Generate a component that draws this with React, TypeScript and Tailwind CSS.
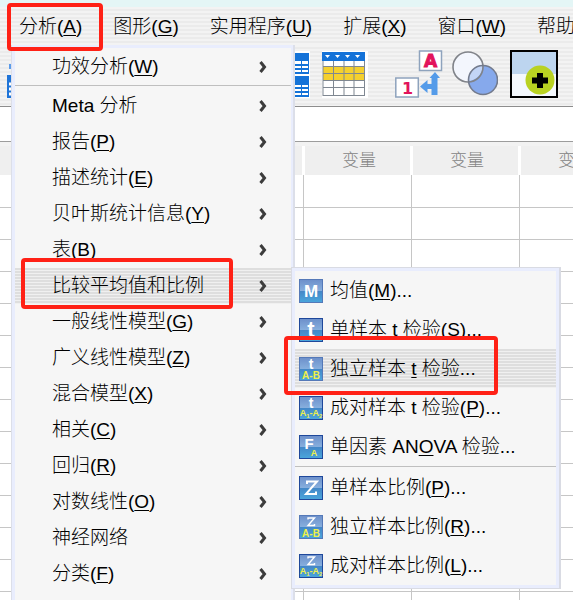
import { Fragment } from "react";
import type { ReactNode } from "react";

interface Label {
  text: string;
  hotkey?: string;
  tail?: string;
}

const topMenus: Label[] = [
  { text: "分析(", hotkey: "A", tail: ")" },
  { text: "图形(", hotkey: "G", tail: ")" },
  { text: "实用程序(", hotkey: "U", tail: ")" },
  { text: "扩展(", hotkey: "X", tail: ")" },
  { text: "窗口(", hotkey: "W", tail: ")" },
  { text: "帮助" },
];

const analyzeItems: Label[] = [
  { text: "功效分析(", hotkey: "W", tail: ")" },
  { text: "Meta 分析" },
  { text: "报告(", hotkey: "P", tail: ")" },
  { text: "描述统计(", hotkey: "E", tail: ")" },
  { text: "贝叶斯统计信息(", hotkey: "Y", tail: ")" },
  { text: "表(", hotkey: "B", tail: ")" },
  { text: "比较平均值和比例" },
  { text: "一般线性模型(", hotkey: "G", tail: ")" },
  { text: "广义线性模型(", hotkey: "Z", tail: ")" },
  { text: "混合模型(", hotkey: "X", tail: ")" },
  { text: "相关(", hotkey: "C", tail: ")" },
  { text: "回归(", hotkey: "R", tail: ")" },
  { text: "对数线性(", hotkey: "O", tail: ")" },
  { text: "神经网络" },
  { text: "分类(", hotkey: "F", tail: ")" },
];

type IconKind = "M" | "t" | "tAB" | "tA1A2" | "F" | "Z" | "ZAB" | "ZA1A2";

const compareItems: (Label & { icon: IconKind })[] = [
  { icon: "M", text: "均值(", hotkey: "M", tail: ")..." },
  { icon: "t", text: "单样本 t 检验(", hotkey: "S", tail: ")..." },
  { icon: "tAB", text: "独立样本 ", hotkey: "t", tail: " 检验..." },
  { icon: "tA1A2", text: "成对样本 t 检验(", hotkey: "P", tail: ")..." },
  { icon: "F", text: "单因素 AN", hotkey: "O", tail: "VA 检验..." },
  { icon: "Z", text: "单样本比例(", hotkey: "P", tail: ")..." },
  { icon: "ZAB", text: "独立样本比例(", hotkey: "R", tail: ")..." },
  { icon: "ZA1A2", text: "成对样本比例(", hotkey: "L", tail: ")..." },
];

const barStripes = "bg-[repeating-linear-gradient(to_bottom,#f3f3f3_0px,#f3f3f3_2px,#ebebeb_2px,#ebebeb_4px)]";
const activeStripes = "bg-[repeating-linear-gradient(to_bottom,#dedede_0px,#dedede_2px,#f0f0f0_2px,#f0f0f0_3px)]";

function MenuText({ label }: { label: Label }) {
  return (
    <span className="whitespace-pre">
      {label.text}
      {label.hotkey && <span className="underline decoration-1 underline-offset-2">{label.hotkey}</span>}
      {label.tail}
    </span>
  );
}

function Chevron() {
  return (
    <svg className="h-3 w-2" viewBox="0 0 8 12" fill="none" stroke="#3c3c3c" strokeWidth="3">
      <path d="M1.500 1 L5.500 6 L1.500 11" />
    </svg>
  );
}

function StatIcon({ kind }: { kind: IconKind }) {
  const gradId = `stat-${kind}`;
  const pale = kind === "M" || kind === "tAB" || kind === "ZAB";
  return (
    <svg className="h-6 w-6 shrink-0" viewBox="0 0 24 24" fontFamily="Liberation Sans, sans-serif" fontWeight="700" textAnchor="middle" fill="#fff">
      <defs>
        <linearGradient id={gradId} x1="0" y1="0" x2="0" y2="1">
          <stop offset="0" stopColor="#6c8fca" />
          <stop offset="0.48" stopColor="#86aedd" />
          <stop offset="0.52" stopColor="#4488c8" />
          <stop offset="1" stopColor="#4aa6dc" />
        </linearGradient>
      </defs>
      <rect x="0.5" y="0.5" width="23" height="23" fill={`url(#${gradId})`} stroke={pale ? "#5579b8" : "#1f489b"} />
      {kind === "M" && <text x="12" y="18" fontSize="17">M</text>}
      {kind === "t" && <text x="12" y="19" fontSize="22">t</text>}
      {kind === "F" && (
        <>
          <text x="10" y="14" fontSize="15">F</text>
          <text x="15" y="21" fontSize="9" fill="#f0f04a">A</text>
        </>
      )}
      {kind[0] === "t" && kind !== "t" && <text x="12" y="12" fontSize="14">t</text>}
      {kind[0] === "Z" && (
        <path
          d={kind === "Z" ? "M8 8V5.500H18L7 18H17V15.500" : "M9 4.500V3H15.500L9 10.500H15.500V9"}
          fill="none"
          stroke="#fff"
          strokeWidth={kind === "Z" ? 2 : 1.400}
        />
      )}
      {(kind === "tAB" || kind === "ZAB") && <text x="12" y="22" fontSize="10" fill="#f0f04a">A-B</text>}
      {(kind === "tA1A2" || kind === "ZA1A2") && (
        <text x="12" y="20" fontSize="9" fill="#f0f04a">
          A<tspan fontSize="6" dy="2">1</tspan><tspan dy="-2">-A</tspan><tspan fontSize="6" dy="2">2</tspan>
        </text>
      )}
    </svg>
  );
}

function ToolButton({ label, className, children }: { label: string; className: string; children: ReactNode }) {
  return (
    <button type="button" aria-label={label} className={`h-12 shrink-0 ${className}`}>
      {children}
    </button>
  );
}

function Toolbar() {
  return (
    <div className={`flex h-[62px] items-center overflow-hidden border-b border-[#8d8d8d] pb-2 pl-[7px] pt-1 ${barStripes}`}>
      <ToolButton label="定位" className="w-4">
        <svg className="h-12 w-4" viewBox="0 0 16 48">
          <rect x="2" y="14" width="14" height="5" fill="#5b9bea" />
          <rect x="0" y="25" width="16" height="23" fill="#1f74d8" />
          <path d="M2 34h14M2 39h14M2 44h14" stroke="#fff" strokeWidth="3" />
        </svg>
      </ToolButton>
      <ToolButton label="拆分文件" className="ml-60 w-[47px]">
        <svg className="h-12 w-[47px]" viewBox="0 0 47 48">
          <rect y="1" width="47" height="47" fill="#fff" />
          <rect y="3" width="46" height="21" fill="#1472d8" />
          <rect y="26" width="46" height="21" fill="#1472d8" />
          <path d="M2 11h43v3h-43zM2 16h43v2h-43zM2 20h43v2h-43zM2 35h43v2h-43zM2 39h43v2h-43zM2 43h43v2h-43z" fill="#fff" />
          <path d="M38.500 10v13M38.500 34v12" stroke="#1472d8" />
        </svg>
      </ToolButton>
      <ToolButton label="选择个案" className="ml-3 w-[46px]">
        <svg className="h-12 w-[46px]" viewBox="0 0 46 48">
          <rect y="1" width="46" height="47" fill="#fff" />
          <rect x="0" y="2" width="43" height="9" fill="#1472d8" />
          <path d="M3 5h5l-2.5 3zM13 5h5l-2.5 3zM23 5h5l-2.5 3zM33 5h5l-2.5 3z" fill="#fff" />
          <rect x="1" y="16" width="42" height="15" fill="#f5d02e" />
          <path d="M1 11V46M11.5 11V46M22 11V46M32 11V46M42.5 11V46M1 16.500H43M1 23.500H43M1 30.500H43M1 37.500H43M1 45.500H43" stroke="#7f8791" />
        </svg>
      </ToolButton>
      <ToolButton label="值标签" className="ml-[27px] w-12">
        <svg className="h-12 w-12" viewBox="0 0 48 48" fontFamily="DejaVu Sans, sans-serif" fontWeight="700" textAnchor="middle" fill="#e2145c">
          <rect x="24.500" y="1" width="22" height="19.500" fill="#fff" stroke="#8ea3bd" strokeWidth="1.500" />
          <text x="35.500" y="17" fontSize="17" stroke="#e2145c">A</text>
          <rect x="0.800" y="28" width="22.500" height="19" fill="#fff" stroke="#8ea3bd" strokeWidth="1.500" />
          <text x="12.500" y="43.500" fontSize="16">1</text>
          <path d="M40 22l5 6h-2.500v17h-6v-6h-4v4l-7.500-6.500 7.500-6.500v4h4v-6h-2z" fill="#549be9" />
        </svg>
      </ToolButton>
      <ToolButton label="使用变量集" className="ml-[9px] w-[46px]">
        <svg className="h-12 w-[46px]" viewBox="0 0 46 48">
          <circle cx="16" cy="17" r="15" fill="#f3f6fd" />
          <circle cx="31" cy="30" r="14.500" fill="#86a9ec" />
          <path d="M16.500 31A15 15 0 0 0 30.500 15.500A14.500 14.500 0 0 0 16.500 31z" fill="#c3d5f6" />
          <circle cx="16" cy="17" r="15" fill="none" stroke="#808389" strokeWidth="1.600" />
          <circle cx="31" cy="30" r="14.500" fill="none" stroke="#737b8d" strokeWidth="1.600" />
        </svg>
      </ToolButton>
      <ToolButton label="定制工具栏" className="ml-3 w-12">
        <svg className="h-12 w-12" viewBox="0 0 48 48">
          <rect x="1" y="1" width="46" height="46" fill="#f4f8fd" />
          <rect x="2" y="2" width="44" height="22" fill="#bdd5ef" />
          <circle cx="30" cy="30" r="14.500" fill="#b9d222" />
          <path d="M27 23h6v4.500h5v6h-5v4.500h-6v-4.500h-5v-6h5z" fill="#000" />
          <rect x="1" y="1" width="46" height="46" fill="none" stroke="#000" strokeWidth="2" />
        </svg>
      </ToolButton>
    </div>
  );
}

function DataGrid() {
  return (
    <div className="overflow-hidden">
      <table className="w-[627px] table-fixed border-collapse">
        <colgroup>
          <col className="w-[87px]" />
          <col span={5} className="w-[108px]" />
        </colgroup>
        <thead>
          <tr className="h-[29px] bg-[#efefef] text-[17px] text-[#858585]">
            {["", "", "", "变量", "变量", "变量"].map((name, i) => (
              <th key={i} className="border-r-3 border-white py-0 pl-1 pr-0 font-light">{name}</th>
            ))}
          </tr>
        </thead>
        <tbody>
          {Array.from({ length: 14 }, (_, r) => (
            <tr key={r} className="h-8">
              {Array.from({ length: 6 }, (_, c) => (
                <td key={c} className="border-b border-r border-[#c6c6c6] p-0" />
              ))}
            </tr>
          ))}
        </tbody>
      </table>
    </div>
  );
}

function AnalyzeMenu() {
  return (
    <div className="absolute left-[11px] top-[45px] h-[600px] w-[284px] border-l border-r-2 border-[#dcdfe9] bg-[#f6f6f6]">
      <div className="h-full border-l-3 border-t-3 border-r-2 border-[#e9edfd] pt-px">
        {analyzeItems.map((item, i) => (
          <Fragment key={item.text}>
            <button
              type="button"
              className={`flex h-9 w-full items-center justify-between pl-[37px] pr-6 ${i === 6 ? activeStripes : ""}`}
            >
              <MenuText label={item} />
              <Chevron />
            </button>
            {i === 0 && <hr className="mb-0.5 border-[#bfbfbf]" />}
          </Fragment>
        ))}
      </div>
    </div>
  );
}

function CompareMenu() {
  return (
    <div className="absolute left-[291px] top-[267px] w-[270px] border border-r-2 border-[#d9dbe3] bg-[#f6f6f6]">
      <div className="border-3 border-[#e9edfd]">
        {compareItems.map((item, i) => (
          <Fragment key={item.icon}>
            {i === 5 && <hr className="mb-px border-[#bfbfbf]" />}
            <button
              type="button"
              className={`flex h-[39px] w-full items-center gap-[7px] pl-1 ${i === 2 ? activeStripes : ""}`}
            >
              <StatIcon kind={item.icon} />
              <MenuText label={item} />
            </button>
          </Fragment>
        ))}
      </div>
    </div>
  );
}

export default function App() {
  return (
    <div className="relative h-screen overflow-hidden bg-white font-['Liberation_Sans','Noto_Sans_CJK_SC',sans-serif] text-[19px] leading-6 font-light text-black">
      <div className="h-[7px] bg-[#e4f6f6]" />
      <nav className={`flex h-[38px] items-center gap-[31px] overflow-hidden pl-[19px] pt-0.5 ${barStripes}`}>
        {topMenus.map((menu) => (
          <button key={menu.text} type="button" className="shrink-0">
            <MenuText label={menu} />
          </button>
        ))}
      </nav>
      <Toolbar />
      <div className="h-[35px] border-b border-[#9c9c9c] bg-white" />
      <div className="h-1 bg-[#f2f2f2]" />
      <DataGrid />

      <AnalyzeMenu />
      <CompareMenu />

      {/* Click path highlights */}
      <div className="pointer-events-none absolute left-[7px] top-[3px] h-12 w-24 rounded-sm border-4 border-[#ff2116]" />
      <div className="pointer-events-none absolute left-[21px] top-[258px] h-[51px] w-[212px] rounded-sm border-4 border-[#ff2116]" />
      <div className="pointer-events-none absolute left-[284px] top-[336px] h-[59px] w-[214px] rounded-sm border-4 border-[#ff2116]" />
    </div>
  );
}
